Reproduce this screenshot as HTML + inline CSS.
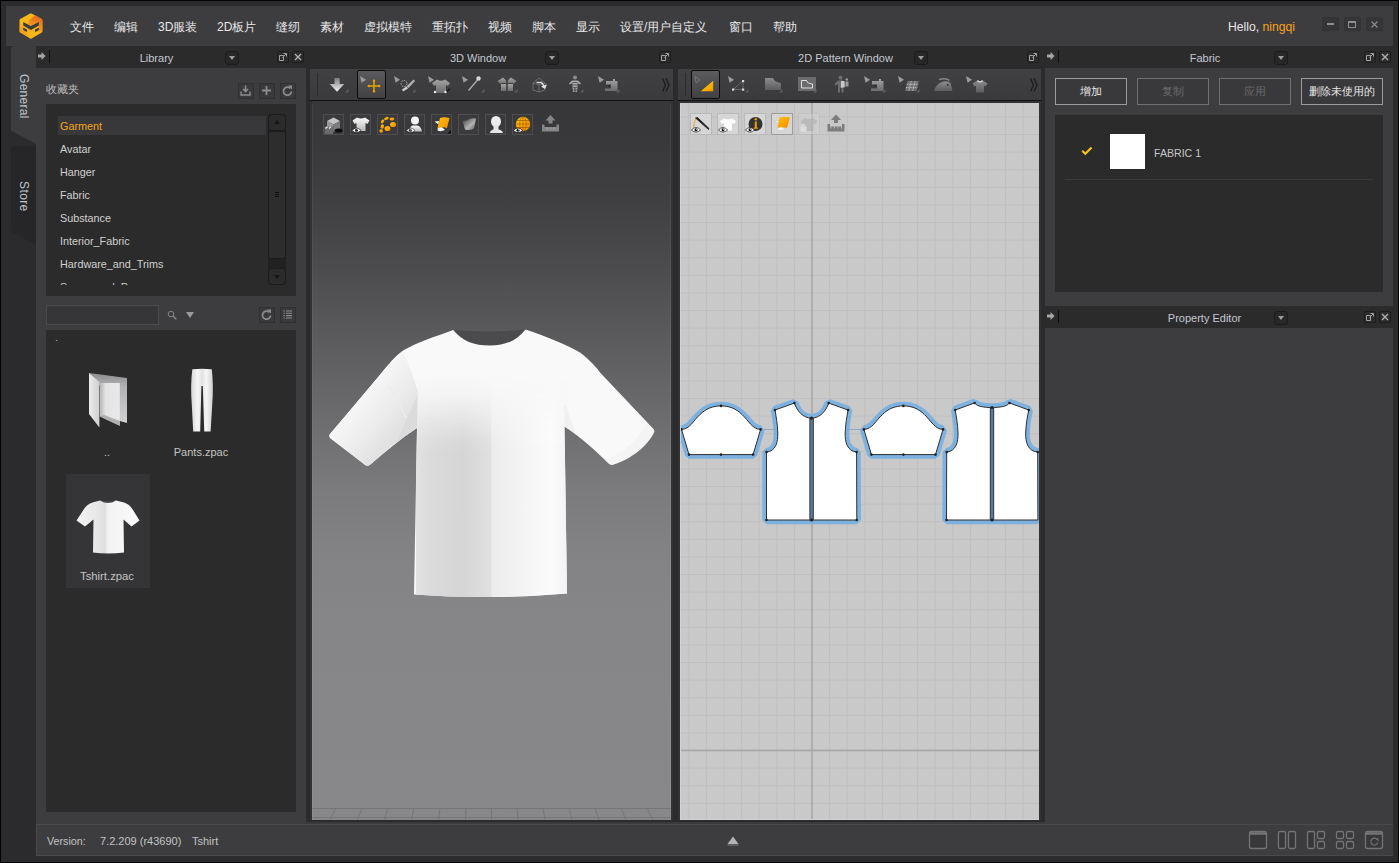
<!DOCTYPE html>
<html>
<head>
<meta charset="utf-8">
<title>CLO</title>
<style>
*{box-sizing:border-box;margin:0;padding:0}
html,body{width:1399px;height:863px;overflow:hidden;background:#000}
body{font-family:"Liberation Sans",sans-serif;font-size:11px;color:#d2d2d2;position:relative}
.abs{position:absolute}
#win{position:absolute;left:1px;top:1px;width:1397px;height:861px;background:#2b2b2d}
#menubar{position:absolute;left:6px;top:6px;width:1387px;height:40px;background:#3d3d40}
.menu{position:absolute;top:19px;font-size:12px;line-height:16px;color:#e6e6e6;white-space:nowrap}
.tbar{position:absolute;top:46px;height:22px;background:#2b2b2c}
.ttl{position:absolute;top:51px;font-size:12px;line-height:14px;color:#c8c8c8;white-space:nowrap;text-align:center}
.pbody{position:absolute;background:#3d3d40}
.dd{position:absolute;top:51px;width:14px;height:14px;background:#272728;border:1px solid #1c1c1d;border-radius:3px;margin:-.5px 0 0 .5px}
.dd:after{content:"";position:absolute;left:3px;top:4px;border-left:3px solid transparent;border-right:3px solid transparent;border-top:4.5px solid #9c9c9c}
.sb{position:absolute;top:51px;width:12px;height:12px;background:#2c2c2d;border:1px solid #1d1d1e;border-radius:2px}
.dark{background:#2b2b2b}
.li{position:absolute;left:60px;font-size:10.8px;line-height:14px;color:#d0d0d0;white-space:nowrap}

.wb{position:absolute;top:18px;width:15px;height:12px;background:#353537;border-radius:2px;box-shadow:0 0 0 1px #333335,0 1px 1px 0 #2d2d2f}
.wb i{position:absolute;display:block}

.t{position:absolute;white-space:nowrap;font-size:11px;line-height:14px;color:#c9c9c9}
.arrow{position:absolute;top:52px;width:8px;height:8px}
.vl{position:absolute;top:50px;width:1px;height:13px;background:#0e0e0e}
.ib{position:absolute;width:16px;height:16px;background:#39393b;border:1px solid #303032}
.btn{position:absolute;top:78px;height:27px;border:1px solid #9b9b9b;background:#39393b;color:#e6e6e6;font-size:11px;line-height:25px;text-align:center;white-space:nowrap}
.btn.dis{border-color:#707072;color:#6a6a6c}
</style>
</head>
<body>
<div id="win"></div>
<div id="menubar"></div>

<!-- title bars strip -->
<div class="tbar" style="left:36px;width:1357px"></div>

<!-- LIBRARY -->
<div class="pbody" style="left:36px;top:68px;width:270px;height:756px"></div>
<!-- 3D -->
<div class="pbody" style="left:310px;top:69px;width:363px;height:31px"></div>
<!-- 2D -->
<div class="pbody" style="left:678px;top:69px;width:363px;height:31px"></div>
<!-- right -->
<div class="pbody" style="left:1045px;top:68px;width:348px;height:756px"></div>
<!-- status -->
<div class="pbody" style="left:36px;top:824px;width:1357px;height:32px;border-top:1px solid #4a4a4c;border-left:1px solid #4a4a4c;border-bottom:1px solid #4a4a4c"></div>

<!-- ===== 3D VIEWPORT ===== -->
<div class="abs" style="left:310px;top:100px;width:363px;height:1px;background:#111"></div>
<div class="abs" style="left:678px;top:100px;width:363px;height:1px;background:#111"></div>
<div id="v3d" class="abs" style="left:312px;top:101px;width:359px;height:719px;background:linear-gradient(#37373a 0%,#39393b 6%,#414143 15%,#4a4a4c 22%,#555557 29%,#69696b 42%,#7b7b7d 54%,#828284 62%,#868688 71%,#88888a 100%);overflow:hidden">
<svg class="abs" style="left:0;top:0" width="359" height="719" viewBox="312 101 359 719">
<defs>
<linearGradient id="gb" x1="414" x2="567" y1="0" y2="0" gradientUnits="userSpaceOnUse">
<stop offset="0" stop-color="#e3e3e3"/><stop offset=".1" stop-color="#dbdbdb"/><stop offset=".32" stop-color="#d5d5d5"/><stop offset=".5" stop-color="#e0e0e0"/><stop offset=".512" stop-color="#ececec"/><stop offset=".75" stop-color="#f5f5f5"/><stop offset=".9" stop-color="#fbfbfb"/><stop offset="1" stop-color="#f3f3f3"/>
</linearGradient>
<linearGradient id="gls" x1="357" y1="402" x2="393.700" y2="433" gradientUnits="userSpaceOnUse"><stop offset="0" stop-color="#f5f5f5" stop-opacity=".9"/><stop offset=".35" stop-color="#f0f0f0"/><stop offset=".6" stop-color="#ececec"/><stop offset="1" stop-color="#e2e2e2"/></linearGradient>
<linearGradient id="gmask" x1="0" x2="0" y1="372" y2="452" gradientUnits="userSpaceOnUse"><stop offset="0" stop-color="#000"/><stop offset=".25" stop-color="#1c1c1c"/><stop offset=".55" stop-color="#808080"/><stop offset=".85" stop-color="#e6e6e6"/><stop offset="1" stop-color="#fff"/></linearGradient>
<linearGradient id="gt" x1="0" x2="0" y1="330" y2="470" gradientUnits="userSpaceOnUse">
<stop offset="0" stop-color="#fff" stop-opacity="1"/><stop offset=".45" stop-color="#fff" stop-opacity=".85"/><stop offset="1" stop-color="#fff" stop-opacity="0"/>
</linearGradient>
<linearGradient id="gsl" x1="329" x2="417" y1="436" y2="380" gradientUnits="userSpaceOnUse">
<stop offset="0" stop-color="#f4f4f4"/><stop offset=".5" stop-color="#fafafa"/><stop offset="1" stop-color="#f3f3f3"/>
</linearGradient>
<linearGradient id="gsr" x1="564" x2="655" y1="380" y2="436" gradientUnits="userSpaceOnUse">
<stop offset="0" stop-color="#f6f6f6"/><stop offset=".4" stop-color="#fcfcfc"/><stop offset="1" stop-color="#fdfdfd"/>
</linearGradient>
</defs>
<!-- collar inside -->
<path d="M453,330 Q490,333 525.5,329.5 Q510,347 490,347 Q468,347 453,330Z" fill="#4b4b4d"/>
<path id="tsil" d="M453.250,330 C462,341 474,345.500 490,345.500 C506,345.500 517,340.500 525.500,329.500 C545,336 568,345 580,352.500 C590,360 596,367 600,372.500 L653,428.500 Q655,430.500 654,432.500 C650,441 637,457 613,464.800 Q610.500,465.500 608.500,463.500 C597,452 582,438 564.500,426.500 L567,593.500 Q490,600 414,594.500 L417,428 C400,439 385,452 370.500,464.500 Q367.500,467 364.500,464.500 L330.500,438.500 Q328,436.500 330,434 L381,373.500 C388,365 395,356 404,350 C416,343 435,336.500 453.250,330Z" fill="#f9f9f9"/>
<clipPath id="ctsil"><use href="#tsil"/></clipPath>
<mask id="mfade" maskUnits="userSpaceOnUse" x="300" y="320" width="400" height="300"><rect x="300" y="320" width="400" height="300" fill="url(#gmask)"/></mask>
<g clip-path="url(#ctsil)">
<rect x="416" y="360" width="152" height="240" fill="url(#gb)" mask="url(#mfade)"/>
<!-- sleeve shading -->
<path d="M402,350 L384,370 L329,435 L367,467 L417,428 L418,392 C414,380 410,365 402,350Z" fill="url(#gls)"/>
<path d="M600,372 L655,431 C648,446 636,458 612,465.500 L605,460 C625,452 638,440 646,424Z" fill="#ececec" opacity=".35"/>
<path d="M417,396 L417,428 L396,444 C402,430 410,412 417,396Z" fill="#d9d9d9" opacity=".8"/>
<path d="M389,386 C396,397 401,407 406,418" fill="none" stroke="#ececec" stroke-width="2"/>
<path d="M564.500,404 L564.500,426.500 L576,434 C572,424 569,412 564.500,404Z" fill="#ebebeb" opacity=".6"/>
</g>
<!-- floor grid -->
<g stroke="#757577" stroke-width="1" fill="none">
<path d="M312,808.5H671M312,817.5H671"/>
<path d="M336,808L330,820M362,808L357.500,820M388,808L384.500,820M414,808L411.500,820M440,808L438.500,820M466,808L465.500,820M491.500,808L491.500,820M517,808L518,820M543,808L545,820M569,808L572,820M595,808L599,820M621,808L626,820M647,808L653,820"/>
</g>
</svg>
</div>

<!-- ===== 2D VIEWPORT ===== -->
<div id="v2d" class="abs" style="left:680px;top:103px;width:359px;height:717px;background:#c9c9c9;overflow:hidden">
<svg class="abs" style="left:0;top:0" width="359" height="717" viewBox="680 103 359 717">
<defs>
<pattern id="grid" x="811.5" y="750" width="17.6" height="17.6" patternUnits="userSpaceOnUse">
<path d="M0.5,0V17.6M0,0.5H17.6" stroke="#bfbfbf" stroke-width="1" fill="none"/>
</pattern>
</defs>
<rect x="680" y="103" width="359" height="717" fill="url(#grid)"/>
<path d="M812,103V820M680,750.5H1039" stroke="#a4a4a4" stroke-width="1.3" fill="none"/>
<g id="pieces">
<!-- seam allowance (blue) -->
<g fill="none" stroke="#7db1e0" stroke-width="8.400" stroke-linejoin="bevel">
<path id="sl1" d="M681.5,429.4 C690,429 693,421 700,414.5 C706,408.5 713,405.9 721,405.9 C729,405.9 736,408.5 742,414.5 C749,421 752,429 760.6,429.4 L753.1,454.6 L689,454.6 Z"/>
<use href="#sl1" x="182.4"/>
<path id="fb" d="M766.5,452.1 C776,451 778,442 777.8,433 C777.6,424 776,416 775,410 L794.4,403.1 C797,411 803,418.1 811.5,418.1 C820,418.1 826,411 828.7,403.1 L848.1,410 C847,416 845.4,424 845.2,433 C845,442 847,451 856.6,452.1 L856.8,520 L766.5,520 Z"/>
<path id="bb" d="M946.7,452.1 C956.2,451 958.2,442 958,433 C957.8,424 956.2,416 955.2,410 L974.6,403 C977,406.500 984,407.5 991.9,407.5 C1000,407.5 1007,406.500 1009.500,403 L1028.8,410 C1027.500,416 1025.900,424 1025.700,433 C1025.500,442 1027.500,451 1037.700,452.1 L1037.900,520 L946.500,520 Z"/>
</g>
<g fill="#fff" stroke="#2e2e2e" stroke-width="1" stroke-linejoin="round">
<use href="#sl1"/><use href="#sl1" x="182.4"/><use href="#fb"/><use href="#bb"/>
</g>
<!-- center lines -->
<path d="M811.6,418V520M992,407.500V520" stroke="#5b7b9d" stroke-width="3.800"/>
<path d="M809.900,418V520M813.300,418V520M990.300,407.500V520M993.700,407.500V520" stroke="#2e2e2e" stroke-width=".9" fill="none"/>
<path d="M760.600,429.500H777.500M845.500,429.500H864" stroke="#7ea4c8" stroke-width="1" opacity=".8"/>
<g fill="#222">
<circle cx="681.5" cy="429.4" r="1.3"/><circle cx="721" cy="405.9" r="1.3"/><circle cx="760.6" cy="429.4" r="1.3"/><circle cx="753.1" cy="454.6" r="1.3"/><circle cx="721" cy="454.6" r="1.3"/><circle cx="689" cy="454.6" r="1.3"/>
<circle cx="863.9" cy="429.4" r="1.3"/><circle cx="903.4" cy="405.9" r="1.3"/><circle cx="943" cy="429.4" r="1.3"/><circle cx="935.5" cy="454.6" r="1.3"/><circle cx="903.4" cy="454.6" r="1.3"/><circle cx="871.4" cy="454.6" r="1.3"/>
<circle cx="766.5" cy="452.1" r="1.3"/><circle cx="775" cy="410" r="1.3"/><circle cx="794.4" cy="403.1" r="1.3"/><circle cx="811.5" cy="418.1" r="1.6"/><circle cx="828.7" cy="403.1" r="1.3"/><circle cx="848.1" cy="410" r="1.3"/><circle cx="856.6" cy="452.1" r="1.3"/><circle cx="856.8" cy="520" r="1.3"/><circle cx="811.6" cy="520" r="1.6"/><circle cx="766.5" cy="520" r="1.3"/>
<circle cx="946.7" cy="452.1" r="1.3"/><circle cx="955.2" cy="410" r="1.3"/><circle cx="974.6" cy="403" r="1.3"/><circle cx="992" cy="407.5" r="1.6"/><circle cx="1009.5" cy="403" r="1.3"/><circle cx="1028.8" cy="410" r="1.3"/><circle cx="1037.7" cy="452.1" r="1.3"/><circle cx="992" cy="520" r="1.6"/><circle cx="946.5" cy="520" r="1.3"/>
</g>
</g>
</svg>
</div>

<!-- edge details -->
<div class="abs" style="left:306px;top:822px;width:739px;height:2px;background:#3a3a3c"></div>
<div class="abs" style="left:680px;top:103px;width:1px;height:717px;background:#d3d3d3"></div>
<div class="abs" style="left:680px;top:819px;width:359px;height:1px;background:#d3d3d3"></div>
<div class="abs" style="left:312px;top:104px;width:1px;height:716px;background:#fff;opacity:.06"></div>
<div class="abs" style="left:670px;top:104px;width:1px;height:716px;background:#fff;opacity:.06"></div>
<div class="abs" style="left:310px;top:101px;width:2px;height:719px;background:#323234"></div>
<div class="abs" style="left:671px;top:101px;width:2px;height:719px;background:#323234"></div>
<div class="abs" style="left:678px;top:101px;width:2px;height:719px;background:#323234"></div>
<div class="abs" style="left:1039px;top:101px;width:2px;height:719px;background:#323234"></div>
<div class="abs" style="left:680px;top:101px;width:359px;height:2px;background:#323234"></div>

<!-- ===== MENU BAR ===== -->
<svg class="abs" style="left:17px;top:10px" width="28" height="32" viewBox="17 10 28 32">
<defs><linearGradient id="lg1" x1="20" y1="14" x2="40" y2="38" gradientUnits="userSpaceOnUse"><stop offset="0" stop-color="#f8bd18"/><stop offset=".55" stop-color="#f4ae1a"/><stop offset="1" stop-color="#f7c016"/></linearGradient>
<linearGradient id="lg2" x1="40" y1="15" x2="32" y2="30" gradientUnits="userSpaceOnUse"><stop offset="0" stop-color="#e5601f"/><stop offset=".6" stop-color="#ee8a1d"/><stop offset="1" stop-color="#f3a61b"/></linearGradient>
<linearGradient id="lg3" x1="19" y1="36" x2="28" y2="28" gradientUnits="userSpaceOnUse"><stop offset="0" stop-color="#ea7e1e"/><stop offset="1" stop-color="#f4ae1a" stop-opacity="0"/></linearGradient></defs>
<path d="M30.850,14.600 L41,20.300 L41,31.200 L30.850,37.300 L20.900,31.200 L20.900,20.300Z" fill="url(#lg1)" stroke="url(#lg1)" stroke-width="2.800" stroke-linejoin="round"/>
<path d="M36,15.800 L41.300,19 Q42.300,19.600 42.300,20.600 L42.300,30.500 L39,32.500 L39,22 L30.850,25.900 C28.500,24.500 28.300,23.500 28.300,23.500 C29.500,19.500 32.500,16.500 36,15.600Z" fill="url(#lg2)"/>
<path d="M19.600,25 L19.600,31.300 L27.500,36.200 L27,30Z" fill="url(#lg3)"/>
<path d="M23.200,22 L30.850,25.900 L38.950,22 L38.950,25.600 L30.850,29.900 L23.200,25.500Z" fill="#3b3b3f"/>
<path d="M23.200,27.500 L26.900,29.400 L26.900,31.900 L23.200,29.900Z M38.950,27.500 L35,29.600 L35,32.200 L38.950,30.100Z" fill="#3b3b3f"/>
</svg>
<div class="menu" style="left:70px">文件</div>
<div class="menu" style="left:114px">编辑</div>
<div class="menu" style="left:158px">3D服装</div>
<div class="menu" style="left:217px">2D板片</div>
<div class="menu" style="left:276px">缝纫</div>
<div class="menu" style="left:320px">素材</div>
<div class="menu" style="left:364px">虚拟模特</div>
<div class="menu" style="left:432px">重拓扑</div>
<div class="menu" style="left:488px">视频</div>
<div class="menu" style="left:532px">脚本</div>
<div class="menu" style="left:576px">显示</div>
<div class="menu" style="left:620px">设置/用户自定义</div>
<div class="menu" style="left:729px">窗口</div>
<div class="menu" style="left:773px">帮助</div>
<div class="menu" style="left:1228px;font-size:12.2px">Hello, <span style="color:#f5a31a">ningqi</span></div>
<div class="wb" style="left:1322.500px"><i style="left:4px;top:5px;width:7px;height:2px;background:#8e8e8e"></i></div>
<div class="wb" style="left:1344.500px"><i style="left:3.500px;top:2.500px;width:8px;height:7px;border:1px solid #8e8e8e;border-top-width:2px"></i></div>
<div class="wb" style="left:1366.500px"><svg class="abs" style="left:4px;top:2.500px" width="7" height="7"><path d="M0.500,0.500L6.500,6.500M6.500,0.500L0.500,6.500" stroke="#909090" stroke-width="1.100"/></svg></div>

<!-- ===== TITLE BARS ===== -->
<svg class="arrow" style="left:38px;top:52px" viewBox="0 0 9 9"><path d="M0,2.700H4V0L8.500,4.500L4,9V6.300H0Z" fill="#a6a6a6"/></svg><div class="vl" style="left:49px;top:50px"></div><div class="t" style="left:96.5px;width:120px;text-align:center;top:51px;color:#c4c8d0">Library</div><div class="dd" style="left:224px;top:51px"></div><div class="sb" style="left:277px;top:51px"><svg class="abs" style="left:1px;top:1px" width="8" height="8" viewBox="0 0 8 8"><path d="M0.500,2.500H4.500V7.500H0.500Z" fill="none" stroke="#a0a0a0" stroke-width="1"/><path d="M3.500,4.500L7,1M4.500,0.500H7.500V3.500" fill="none" stroke="#a0a0a0" stroke-width="1"/></svg></div><div class="sb" style="left:292px;top:51px"><svg class="abs" style="left:1px;top:1px" width="8" height="8" viewBox="0 0 8 8"><path d="M1,1L7,7M7,1L1,7" stroke="#b0b0b0" stroke-width="1.400"/></svg></div>
<div class="t" style="left:418px;width:120px;text-align:center;top:51px;color:#c4c8d0">3D Window</div><div class="dd" style="left:544px;top:51px"></div><div class="sb" style="left:659px;top:51px"><svg class="abs" style="left:1px;top:1px" width="8" height="8" viewBox="0 0 8 8"><path d="M0.500,2.500H4.500V7.500H0.500Z" fill="none" stroke="#a0a0a0" stroke-width="1"/><path d="M3.500,4.500L7,1M4.500,0.500H7.500V3.500" fill="none" stroke="#a0a0a0" stroke-width="1"/></svg></div>
<div class="t" style="left:785.5px;width:120px;text-align:center;top:51px;color:#c4c8d0">2D Pattern Window</div><div class="dd" style="left:913px;top:51px"></div><div class="sb" style="left:1027px;top:51px"><svg class="abs" style="left:1px;top:1px" width="8" height="8" viewBox="0 0 8 8"><path d="M0.500,2.500H4.500V7.500H0.500Z" fill="none" stroke="#a0a0a0" stroke-width="1"/><path d="M3.500,4.500L7,1M4.500,0.500H7.500V3.500" fill="none" stroke="#a0a0a0" stroke-width="1"/></svg></div>
<svg class="arrow" style="left:1047px;top:52px" viewBox="0 0 9 9"><path d="M0,2.700H4V0L8.500,4.500L4,9V6.300H0Z" fill="#a6a6a6"/></svg><div class="vl" style="left:1058px;top:50px"></div><div class="t" style="left:1145px;width:120px;text-align:center;top:51px;color:#c4c8d0">Fabric</div><div class="dd" style="left:1273px;top:51px"></div><div class="sb" style="left:1364px;top:51px"><svg class="abs" style="left:1px;top:1px" width="8" height="8" viewBox="0 0 8 8"><path d="M0.500,2.500H4.500V7.500H0.500Z" fill="none" stroke="#a0a0a0" stroke-width="1"/><path d="M3.500,4.500L7,1M4.500,0.500H7.500V3.500" fill="none" stroke="#a0a0a0" stroke-width="1"/></svg></div><div class="sb" style="left:1379px;top:51px"><svg class="abs" style="left:1px;top:1px" width="8" height="8" viewBox="0 0 8 8"><path d="M1,1L7,7M7,1L1,7" stroke="#b0b0b0" stroke-width="1.400"/></svg></div>
<div class="tbar" style="left:1045px;top:306px;width:348px"></div>
<svg class="arrow" style="left:1047px;top:312px" viewBox="0 0 9 9"><path d="M0,2.700H4V0L8.500,4.500L4,9V6.300H0Z" fill="#a6a6a6"/></svg><div class="vl" style="left:1058px;top:310px"></div><div class="t" style="left:1144.5px;width:120px;text-align:center;top:311px;color:#c4c8d0">Property Editor</div><div class="dd" style="left:1273px;top:311px"></div><div class="sb" style="left:1364px;top:311px"><svg class="abs" style="left:1px;top:1px" width="8" height="8" viewBox="0 0 8 8"><path d="M0.500,2.500H4.500V7.500H0.500Z" fill="none" stroke="#a0a0a0" stroke-width="1"/><path d="M3.500,4.500L7,1M4.500,0.500H7.500V3.500" fill="none" stroke="#a0a0a0" stroke-width="1"/></svg></div><div class="sb" style="left:1379px;top:311px"><svg class="abs" style="left:1px;top:1px" width="8" height="8" viewBox="0 0 8 8"><path d="M1,1L7,7M7,1L1,7" stroke="#b0b0b0" stroke-width="1.400"/></svg></div>

<!-- ===== LIBRARY ===== -->
<div class="t" style="left:46px;top:82px;font-size:11px;color:#bdbdbd">收藏夹</div>
<div class="ib" style="left:238px;top:83px"><svg class="abs" style="left:1px;top:1px" width="11" height="11" viewBox="0 0 11 11"><path d="M5.500,0.500V6M3,4L5.500,6.500L8,4" fill="none" stroke="#8c8c8c" stroke-width="1.600"/><path d="M1,6.500V10H10V6.500" fill="none" stroke="#8c8c8c" stroke-width="1.400"/></svg></div>
<div class="ib" style="left:259px;top:83px"><svg class="abs" style="left:1px;top:1px" width="11" height="11" viewBox="0 0 11 11"><path d="M5.500,1V10M1,5.500H10" fill="none" stroke="#8c8c8c" stroke-width="1.800"/></svg></div>
<div class="ib" style="left:280px;top:83px"><svg class="abs" style="left:1px;top:1px" width="11" height="11" viewBox="0 0 11 11"><path d="M8.500,3.500A4,4 0 1 0 9.500,6.500" fill="none" stroke="#8c8c8c" stroke-width="1.700"/><path d="M6,0.500H10V4.500Z" fill="#8c8c8c"/></svg></div>
<div class="abs dark" style="left:46px;top:104px;width:250px;height:192px;overflow:hidden">
  <div class="abs" style="left:12px;top:12px;width:208px;height:19px;background:#38383a"></div>
  <div class="li" style="left:14px;top:15px;color:#f5a31a">Garment</div>
  <div class="li" style="left:14px;top:38px">Avatar</div>
  <div class="li" style="left:14px;top:61px">Hanger</div>
  <div class="li" style="left:14px;top:84px">Fabric</div>
  <div class="li" style="left:14px;top:107px">Substance</div>
  <div class="li" style="left:14px;top:130px">Interior_Fabric</div>
  <div class="li" style="left:14px;top:153px">Hardware_and_Trims</div>
  <div class="abs" style="left:12px;top:176px;width:200px;height:5px;overflow:hidden"><div class="li" style="left:2px;top:0">Scene_and_Props</div></div>
  <!-- scrollbar -->
  <div class="abs" style="left:222px;top:10px;width:18px;height:171px;background:#212122;border-radius:4px"></div>
  <div class="abs" style="left:222px;top:10px;width:18px;height:17px;background:#2b2b2c;border:1px solid #1c1c1d;border-radius:4px"></div>
  <div class="abs" style="left:228px;top:16px;border-left:3px solid transparent;border-right:3px solid transparent;border-bottom:4px solid #161617;width:0;height:0"></div>
  <div class="abs" style="left:222px;top:27px;width:18px;height:128px;background:#2d2d2e;border:1px solid #1c1c1d;border-radius:3px"></div>
  <div class="abs" style="left:229px;top:88px;width:4px;height:1px;background:#101011;box-shadow:0 2px 0 #101011,0 4px 0 #101011"></div>
  <div class="abs" style="left:222px;top:164px;width:18px;height:17px;background:#2b2b2c;border:1px solid #1c1c1d;border-radius:4px"></div>
  <div class="abs" style="left:228px;top:171px;border-left:3px solid transparent;border-right:3px solid transparent;border-top:4px solid #161617;width:0;height:0"></div>
</div>
<!-- search row -->
<div class="abs" style="left:46px;top:305px;width:113px;height:20px;background:#363638;border:1px solid #4b4b4d"></div>
<svg class="abs" style="left:167px;top:310px" width="11" height="11" viewBox="0 0 11 11"><circle cx="4" cy="4" r="2.800" fill="none" stroke="#858585" stroke-width="1"/><path d="M6.200,6.200L9.300,9.300" stroke="#858585" stroke-width="1.500"/></svg>
<div class="abs" style="left:186px;top:312px;width:0;height:0;border-left:4.500px solid transparent;border-right:4.500px solid transparent;border-top:6px solid #9a9a9a"></div>
<div class="ib" style="left:259px;top:307px"><svg class="abs" style="left:1px;top:1px" width="11" height="11" viewBox="0 0 11 11"><path d="M8.500,3.500A4,4 0 1 0 9.500,6.500" fill="none" stroke="#8c8c8c" stroke-width="1.700"/><path d="M6,0.500H10V4.500Z" fill="#8c8c8c"/></svg></div>
<div class="ib" style="left:280px;top:307px"><svg class="abs" style="left:1px;top:1px" width="11" height="11" viewBox="0 0 11 11"><path d="M1.500,2H2.800M4,2H10M1.500,4.300H2.800M4,4.300H10M1.500,6.600H2.800M4,6.600H10M1.500,9H2.800M4,9H10" stroke="#8e8e8e" stroke-width="1.100"/></svg></div>
<!-- file list -->
<div class="abs dark" style="left:46px;top:330px;width:250px;height:482px"></div>
<div class="t" style="left:55px;top:330px;color:#aaa">.</div>
<div class="abs" style="left:66px;top:474px;width:84px;height:114px;background:#353537"></div>
<div class="t" style="left:47px;width:120px;text-align:center;top:445px;color:#bdbdbd">..</div>
<div class="t" style="left:141px;width:120px;text-align:center;top:445px;color:#c4c4c4">Pants.zpac</div>
<div class="t" style="left:47px;width:120px;text-align:center;top:569px;color:#c4c4c4;font-size:11.3px">Tshirt.zpac</div>
<!-- folder icon -->
<svg class="abs" style="left:86px;top:370px" width="44" height="60" viewBox="86 370 44 60">
<defs><linearGradient id="fo1" x1="0" x2="0" y1="0" y2="1"><stop offset="0" stop-color="#8e8e90"/><stop offset=".3" stop-color="#b4b4b6"/><stop offset="1" stop-color="#d0d0d2"/></linearGradient>
<linearGradient id="fo2" x1="0" x2="1" y1="0" y2="0"><stop offset="0" stop-color="#ececec"/><stop offset="1" stop-color="#cfcfcf"/></linearGradient>
<linearGradient id="fo3" x1="0" x2="1" y1="0" y2="0"><stop offset="0" stop-color="#b4b4b6"/><stop offset=".3" stop-color="#e4e4e4"/><stop offset="1" stop-color="#e8e8e8"/></linearGradient></defs>
<path d="M89,373 L127,378 L127,423 L119.800,421 L99.500,385Z" fill="url(#fo1)"/>
<path d="M99.800,383 L119.800,383 L119.800,425.800 L99.800,416.500Z" fill="url(#fo3)"/>
<path d="M99.800,416.500 L119.800,425.800 L119.800,421 L104,415Z" fill="#a2a2a4" opacity=".8"/>
<path d="M89,373 L99.400,382 L99.400,427.600 L89,414Z" fill="url(#fo2)"/>
</svg>
<!-- pants icon -->
<svg class="abs" style="left:188px;top:367px" width="28" height="68" viewBox="188 367 28 68">
<defs><linearGradient id="pa" x1="0" x2="1" y1="0" y2="0"><stop offset="0" stop-color="#d6d6d6"/><stop offset=".3" stop-color="#f6f6f6"/><stop offset=".5" stop-color="#e2e2e2"/><stop offset=".7" stop-color="#f6f6f6"/><stop offset="1" stop-color="#d0d0d0"/></linearGradient></defs>
<path d="M192.300,369.300 Q202,368.300 211.800,369.300 C213,380 213.300,392 212.200,405 L210.600,431.500 L204.200,431.500 L202.800,386 L201.400,386 L200.200,431.500 L193.200,431.500 L191.800,405 C190.800,392 191,380 192.300,369.300Z" fill="url(#pa)"/>
</svg>
<!-- tshirt icon -->
<svg class="abs" style="left:74px;top:497px" width="68" height="60" viewBox="74 497 68 60">
<defs><linearGradient id="ts" x1="0" x2="1" y1="0" y2="0"><stop offset="0" stop-color="#f2f2f2"/><stop offset=".3" stop-color="#e9e9e9"/><stop offset=".45" stop-color="#dedede"/><stop offset=".5" stop-color="#f3f3f3"/><stop offset="1" stop-color="#fafafa"/></linearGradient></defs>
<path d="M100,500.500 Q108,503.500 116,500.500 L124,502.500 C129,504 131,507 133,510 L139.500,520.500 L131.500,526.500 L123.500,519.500 L124,552.500 Q108,554.500 93,552.500 L93.500,519.500 L85,526.500 L76.500,520.500 L84,509 C86,506 88,504 92.500,502.500Z" fill="url(#ts)"/>
<path d="M100,500.500 Q108,502 116,500.500 Q108,505.500 100,500.500Z" fill="#4a4a4c"/>
</svg>

<!-- ===== FABRIC PANEL ===== -->
<div class="btn" style="left:1055px;width:72px">增加</div>
<div class="btn dis" style="left:1137px;width:72px">复制</div>
<div class="btn dis" style="left:1219px;width:72px">应用</div>
<div class="btn" style="left:1301px;width:82px">删除未使用的</div>
<div class="abs dark" style="left:1055px;top:115px;width:328px;height:177px"></div>
<svg class="abs" style="left:1081px;top:146px" width="12" height="10" viewBox="0 0 12 10"><path d="M1.200,4.800L4.300,7.800L10.600,1.500" fill="none" stroke="#f7c11e" stroke-width="2.200"/></svg>
<div class="abs" style="left:1110px;top:134px;width:35px;height:35px;background:#fff"></div>
<div class="t" style="left:1154px;top:146px;font-size:10.600px;color:#c6c6c6">FABRIC 1</div>
<div class="abs" style="left:1065px;top:179px;width:308px;height:1px;background:#39393b"></div>

<!-- ===== STATUS BAR ===== -->
<div class="t" style="left:47px;top:834px;font-size:10.700px;color:#c2c2c2">Version:</div>
<div class="t" style="left:100px;top:834px;color:#c2c2c2">7.2.209 (r43690)</div>
<div class="t" style="left:192px;top:834px;color:#c2c2c2">Tshirt</div>
<svg class="abs" style="left:726px;top:835px" width="14" height="12" viewBox="0 0 14 12"><path d="M7,1.500L12.500,9H1.500Z" fill="#b4b4b4"/><path d="M1.500,10H12.500" stroke="#6a6a6c" stroke-width="1.500"/></svg>
<svg class="abs" style="left:1248px;top:830px" width="138" height="21" viewBox="1248 830 138 21" fill="#38383a" stroke="#747476" stroke-width="1.300">
<rect x="1249.500" y="831.500" width="17" height="17" rx="2"/><path d="M1250,833.500H1266" stroke-width="2.500"/>
<rect x="1278.500" y="831.500" width="7" height="17" rx="1.500"/><rect x="1288.500" y="831.500" width="7" height="17" rx="1.500"/>
<rect x="1307.500" y="831.500" width="7" height="17" rx="1.500"/><rect x="1317.500" y="831.500" width="7" height="7" rx="1.500"/><rect x="1317.500" y="841.500" width="7" height="7" rx="1.500"/>
<rect x="1336.500" y="831.500" width="7" height="7" rx="1.500"/><rect x="1346.500" y="831.500" width="7" height="7" rx="1.500"/><rect x="1336.500" y="841.500" width="7" height="7" rx="1.500"/><rect x="1346.500" y="841.500" width="7" height="7" rx="1.500"/>
<rect x="1365.500" y="831.500" width="17" height="17" rx="2"/><path d="M1366,833.500H1382" stroke-width="2.500"/>
<path d="M1377.200,839.500A3.500,3.500 0 1 0 1377.800,842.500" stroke-width="1.100"/><path d="M1375.500,838.500H1378.500V841.500Z" fill="#747476" stroke="none"/>
</svg>

<!-- ===== LEFT TABS ===== -->
<svg class="abs" style="left:1px;top:46px" width="35" height="250" viewBox="1 46 35 250">
<path d="M11,50 Q11,46 15,46 H36 V144 L11,130.500Z" fill="#3d3d40"/>
<path d="M11,150 Q11,146 15,146 L36,146 V245 L11,231.500Z" fill="#262628"/>
</svg>
<div class="abs" style="left:16px;top:74px;width:18px;height:60px"><div style="transform:rotate(90deg);transform-origin:0 0;position:absolute;left:15px;top:0;font-size:12px;line-height:14px;letter-spacing:.3px;color:#bfc3cb;white-space:nowrap">General</div></div>
<div class="abs" style="left:16px;top:181px;width:18px;height:60px"><div style="transform:rotate(90deg);transform-origin:0 0;position:absolute;left:15px;top:0;font-size:12px;line-height:14px;letter-spacing:.4px;color:#bfc3cb;white-space:nowrap">Store</div></div>

<!-- ===== 3D TOOLBAR ===== -->
<div class="abs" style="left:310px;top:69px;width:363px;height:31px;background:linear-gradient(#414143,#3a3a3c)"></div>
<div class="abs" style="left:678px;top:69px;width:363px;height:31px;background:linear-gradient(#414143,#3a3a3c)"></div>
<div class="abs" style="left:317px;top:73px;width:1px;height:23px;background:#2c2c2e"></div>
<div class="abs" style="left:685px;top:73px;width:1px;height:23px;background:#2c2c2e"></div>
<div class="abs" style="left:357px;top:70px;width:29px;height:29px;border:1.500px solid #0c0c0c;border-radius:2px;background:linear-gradient(#5b5b5d,#414143)"></div>
<div class="abs" style="left:691px;top:70px;width:29px;height:29px;border:1.500px solid #0c0c0c;border-radius:2px;background:linear-gradient(#5b5b5d,#414143)"></div>
<svg class="abs" style="left:310px;top:69px" width="363" height="31" viewBox="310 69 363 31">
<defs>
<linearGradient id="gw" x1="0" x2="0" y1="0" y2="1"><stop offset="0" stop-color="#7c7c7c"/><stop offset="1" stop-color="#f4f4f4"/></linearGradient>
<linearGradient id="gg" x1="0" x2="0" y1="0" y2="1"><stop offset="0" stop-color="#a4a4a4"/><stop offset="1" stop-color="#6c6c6c"/></linearGradient>
</defs>
<path d="M334.500,78H339.700V84H344.300L337,91.700L329.700,84H334.500Z" fill="url(#gw)"/>
<path d="M345,92.5L348.5,89V92.5Z" fill="#5e5e60"/><path d="M360,76L366,79.8L361.6,82.8Z" fill="#9c9c9c"/>
<path d="M374,81V91M369,86H379" stroke="#e0a800" stroke-width="1.500"/>
<g fill="#f59a00"><circle cx="374" cy="80.800" r="1.200"/><circle cx="374" cy="91.200" r="1.200"/><circle cx="368.800" cy="86" r="1.200"/><circle cx="379.200" cy="86" r="1.200"/></g>
<path d="M394,76L400,79.8L395.6,82.8Z" fill="#9c9c9c"/>
<circle cx="404" cy="83.500" r="3" fill="none" stroke="#b8b8b8" stroke-width="1" stroke-dasharray="1.500 1.200"/>
<path d="M406.500,86.500L413.500,79.500L415,81L408.500,88Z" fill="#b4b4b4"/><path d="M402,89.500L406.500,86.500L408,88.500L403,91.500Z" fill="#d0d0d0"/>
<path d="M412,92.5L415.5,89V92.5Z" fill="#5e5e60"/><path d="M428,76L434,79.8L429.6,82.8Z" fill="#9c9c9c"/>
<path d="M437,79.500Q441,82 445,79.500L450,83L448,86L446,85V93H436V85L434,86L432,83Z" fill="url(#gg)"/>
<path d="M446,92.500L450,88.500" stroke="#1a1a1a" stroke-width="1.600"/><circle cx="435" cy="92" r="1.200" fill="#eee"/><circle cx="445.500" cy="92" r="1.200" fill="#eee"/>
<path d="M462,76L468,79.8L463.6,82.8Z" fill="#9c9c9c"/>
<path d="M468.500,90.500L477.500,80" stroke="#b0b0b0" stroke-width="1.200"/><circle cx="478.500" cy="78.500" r="2.200" fill="#d8d8d8"/>
<path d="M481,92.5L484.5,89V92.5Z" fill="#5e5e60"/>
<path d="M497.500,81L503,77.500Q505,78.500 506.200,81V83H501V84.500Z M516.500,81L511,77.500Q509,78.500 507.800,81V83H513V84.500Z" fill="url(#gg)"/>
<path d="M501,84H506.200V91H501Z M507.800,84H513V91H507.800Z" fill="url(#gg)"/>
<path d="M514,92.5L517.5,89V92.5Z" fill="#5e5e60"/>
<path d="M533,83L539,78L545,83V90L539,92L533,90Z M533,83L539,85L545,83 M539,85V92" fill="none" stroke="#6c6c6e" stroke-width="1"/>
<path d="M536.500,82.500H541.500L544,86" fill="none" stroke="#d8d8d8" stroke-width="1.600"/><path d="M541,86.500L547,84.500L545,89Z" fill="#e4e4e4"/>
<circle cx="575" cy="77.500" r="2" fill="#8a8a8a"/>
<path d="M569,83.500L572,80.500H578L581,83.500L580,84.500L577.500,83V87L577,92H575.500V88H574.500V92H573L572.500,87V83L570,84.500Z" fill="#a8a8a8"/>
<path d="M572.500,82.500H577.500M572.500,85H577.500M573,87.500H577M573,90H577" stroke="#4a4a4c" stroke-width=".8"/>
<path d="M580,92.5L583.5,89V92.5Z" fill="#5e5e60"/><path d="M598,76L604,79.8L599.6,82.8Z" fill="#9c9c9c"/>
<path d="M606,81H613V79H615V81H617.500V91H605V88.500H611V84.500H606Z" fill="url(#gg)"/><path d="M607.500,86.500L610,84.500V87Z" fill="#2a2a2a"/>
<path d="M616,92.5L619.5,89V92.5Z" fill="#5e5e60"/>
<path d="M662.500,78.500L665.500,85L662.500,91.500M666,78.500L669,85L666,91.500" fill="none" stroke="#1c1c1c" stroke-width="1.300"/>
</svg>

<!-- ===== 2D TOOLBAR ===== -->
<svg class="abs" style="left:678px;top:69px" width="363" height="31" viewBox="678 69 363 31">
<defs><linearGradient id="gy" x1="0" x2="1" y1="0" y2="1"><stop offset="0" stop-color="#ffe000"/><stop offset="1" stop-color="#f59400"/></linearGradient></defs>
<path d="M694.800,76.500L699.800,80L696.200,82.800Z" fill="none" stroke="#7c7c7e" stroke-width=".9"/>
<path d="M700.800,91.200H713.200V80.800Z" fill="url(#gy)"/>
<path d="M728,76L734,79.8L729.6,82.8Z" fill="#9c9c9c"/>
<path d="M733,89.500H743V81Z" fill="none" stroke="#6e6e70" stroke-width=".9"/>
<g fill="#d8d8d8"><rect x="732" y="88.500" width="2.200" height="2.200"/><rect x="742" y="88.500" width="2.200" height="2.200"/><rect x="742" y="80" width="2.200" height="2.200"/></g>
<path d="M745,92.5L748.5,89V92.5Z" fill="#5e5e60"/>
<path d="M765,78H773Q774,82 781,83V90H765Z" fill="url(#gg2)"/>
<path d="M779,92.5L782.5,89V92.5Z" fill="#5e5e60"/>
<rect x="798" y="77" width="18" height="14" fill="#6b6b6d"/>
<path d="M801.500,80.500H806.500Q807,83.500 812.500,84V88H801.500Z" fill="none" stroke="#e0e0e0" stroke-width="1"/>
<path d="M813,92.5L816.5,89V92.5Z" fill="#5e5e60"/>
<circle cx="840.500" cy="77.800" r="2" fill="#6e6e70"/>
<path d="M834.500,84L838,80.500H843L845.500,83V87H843.500V92.500H841.500V88H840V92.500H838V84L835.500,85.500Z" fill="#6e6e70"/>
<path d="M841,81H844.500V87.500H841Z" fill="#c8c8c8"/><circle cx="846.800" cy="79.500" r="1.300" fill="#9a9a9a"/><path d="M845.500,81.500H848.500V86.500H845.500Z" fill="#9a9a9a"/>
<path d="M864,76L870,79.8L865.6,82.8Z" fill="#9c9c9c"/>
<path d="M872,81H879V79H881V81H883.500V91H871V88.500H877V84.500H872Z" fill="url(#gg)"/><path d="M873.500,86.500L876,84.500V87Z" fill="#2a2a2a"/>
<path d="M882,92.5L885.5,89V92.5Z" fill="#5e5e60"/><path d="M898,76L904,79.8L899.6,82.8Z" fill="#9c9c9c"/>
<path d="M907.500,81H919L916.500,91H905Z" fill="#707072"/>
<path d="M906.800,84.300H918.200M906,87.600H917.400M911.300,81L908.800,91M915.200,81L912.700,91" stroke="#cfcfcf" stroke-width=".8" stroke-dasharray="1.400 .8"/>
<path d="M916,92.5L919.5,89V92.5Z" fill="#5e5e60"/>
<path d="M934,91Q936,84 943,81.500Q948,80.500 950.500,83L952.500,91Z" fill="url(#gg2)"/><path d="M939,79.500Q946,77.500 949.500,80.500" fill="none" stroke="#858587" stroke-width="1.600"/><circle cx="947.800" cy="84.800" r=".9" fill="#222"/>
<path d="M966,76L972,79.8L967.6,82.8Z" fill="#9c9c9c"/>
<path d="M977.500,80.500Q980,83 982.500,80.500L987.500,83.500L985.500,86.500L984,85.800V92.500H976V85.800L974.500,86.500L972.500,83.500Z" fill="url(#gg2)"/><path d="M977.500,80.500Q980,83.500 982.500,80.500" fill="none" stroke="#e4e4e4" stroke-width="1.200"/>
<path d="M1030.500,78.500L1033.500,85L1030.500,91.500M1034,78.500L1037,85L1034,91.500" fill="none" stroke="#1c1c1c" stroke-width="1.300"/>
<defs><linearGradient id="gg2" x1="0" x2="0" y1="0" y2="1"><stop offset="0" stop-color="#8c8c8e"/><stop offset="1" stop-color="#5c5c5e"/></linearGradient></defs>
</svg>

<!-- ===== 3D VIEW ICONS ===== -->
<svg class="abs" style="left:321px;top:110px" width="245" height="28" viewBox="320 110 245 28">
<defs>
<linearGradient id="io" x1="0" x2="1" y1="0" y2="1"><stop offset="0" stop-color="#ffc400"/><stop offset="1" stop-color="#f58a00"/></linearGradient>
<linearGradient id="iw" x1="0" x2="0" y1="0" y2="1"><stop offset="0" stop-color="#fafafa"/><stop offset="1" stop-color="#b8b8b8"/></linearGradient>
<linearGradient id="igr" x1="0" x2="1" y1="0" y2="1"><stop offset="0" stop-color="#3a3a3a"/><stop offset=".6" stop-color="#b4b4b4"/><stop offset="1" stop-color="#555"/></linearGradient>
</defs>
<rect x="322.5" y="114.500" width="20" height="20" fill="#3a3a3c" stroke="#4e4e50" stroke-width="1"/><rect x="349.5" y="114.500" width="20" height="20" fill="#3a3a3c" stroke="#4e4e50" stroke-width="1"/><rect x="376.5" y="114.500" width="20" height="20" fill="#3a3a3c" stroke="#4e4e50" stroke-width="1"/><rect x="403.5" y="114.500" width="20" height="20" fill="#3a3a3c" stroke="#4e4e50" stroke-width="1"/><rect x="430.5" y="114.500" width="20" height="20" fill="#3a3a3c" stroke="#4e4e50" stroke-width="1"/><rect x="457.5" y="114.500" width="20" height="20" fill="#3a3a3c" stroke="#4e4e50" stroke-width="1"/><rect x="484.5" y="114.500" width="20" height="20" fill="#3a3a3c" stroke="#4e4e50" stroke-width="1"/><rect x="511.5" y="114.500" width="20" height="20" fill="#3a3a3c" stroke="#4e4e50" stroke-width="1"/>
<!-- 1 cube -->
<path d="M326,121L332.500,117.500L339,121L332.500,124.500Z" fill="#c4c4c4"/><path d="M326,121L332.500,124.500V132L326,128.500Z" fill="#9a9a9a"/><path d="M339,121L332.500,124.500V132L339,128.500Z" fill="#7c7c7c"/>
<ellipse cx="337.500" cy="130.500" rx="4" ry="2" fill="#0c0c0c"/><path d="M323.500,126.500H332V134H323.500Z" fill="#6a6a6a"/><path d="M324.500,128.500L326.500,126.800M328,128.500L330,126.800" stroke="#f0f0f0" stroke-width="1.200"/>
<!-- 2 tshirt -->
<path d="M356,117.500Q360,119.500 364,117.500L368.500,120.500L366.500,124L364.500,123V131H355.500V123L353.500,124L351.500,120.500Z" fill="url(#iw)"/>
<path d="M350.9,130.5Q355.5,125.5 360.1,130.5Q355.5,134.7 350.9,130.5Z" fill="#fff" stroke="#1a1a1a" stroke-width=".7"/><circle cx="355.5" cy="130.3" r="1.500" fill="#111"/><circle cx="356.1" cy="129.7" r=".5" fill="#fff"/>
<!-- 3 dots -->
<g fill="url(#io)"><ellipse cx="385.500" cy="118.500" rx="2.400" ry="1.500" transform="rotate(-25 385.500 118.500)"/><ellipse cx="391" cy="119" rx="2.300" ry="1.600"/><ellipse cx="392" cy="124.500" rx="3" ry="2.600"/><ellipse cx="386.500" cy="128.500" rx="2.900" ry="2.600"/><ellipse cx="381.300" cy="126.500" rx="1.700" ry="2.300" transform="rotate(15 381.300 126.500)"/><ellipse cx="381.500" cy="121.500" rx="1.500" ry="2.100" transform="rotate(35 381.500 121.500)"/><circle cx="380.200" cy="131" r="1.800"/></g>
<!-- 4 avatar -->
<circle cx="414" cy="120.500" r="4" fill="#f4f4f4"/><path d="M408.500,131.500Q408.500,126 412,125.500H416Q420,126 421,131.500Z" fill="url(#iw)"/>
<g opacity=".75"><path d="M404.9,130.5Q409.5,125.5 414.1,130.5Q409.5,134.7 404.9,130.5Z" fill="#fff" stroke="#1a1a1a" stroke-width=".7"/><circle cx="409.5" cy="130.3" r="1.500" fill="#111"/><circle cx="410.1" cy="129.7" r=".5" fill="#fff"/></g>
<!-- 5 fabric orange -->
<path d="M433.500,121.500L438,121L436.500,130.500Q440,132 444,130L442,128Z" fill="#f0f0f0"/><path d="M439,118Q443,116.500 448.500,118L446,128Q441,126.500 436.500,128.500Z" fill="url(#io)"/><path d="M446.500,133.500L450,130V133.500Z" fill="#0c0c0c"/>
<!-- 6 gray fabric -->
<path d="M461.500,121L465.500,120.500Q470,117.500 475,118.500L473,128.500Q469,131 464,129.500Z" fill="url(#igr)"/>
<!-- 7 head -->
<ellipse cx="495" cy="121.500" rx="5" ry="5.600" fill="#ececec"/><path d="M492.500,125H497.500V129.500Q501.500,130 502,133H489Q489,130.500 492.500,129.500Z" fill="#e4e4e4"/>
<!-- 8 globe -->
<circle cx="522" cy="124" r="7.200" fill="url(#io)"/><g fill="none" stroke="#8a4a00" stroke-width=".7" opacity=".8"><path d="M515,124H529M516,120.500H528M516,127.500H528"/><ellipse cx="522" cy="124" rx="3.300" ry="7.200"/><path d="M522,116.800V131.200"/></g>
<path d="M512.4,130.5Q517.0,125.5 521.6,130.5Q517.0,134.7 512.4,130.5Z" fill="#fff" stroke="#1a1a1a" stroke-width=".7"/><circle cx="517.0" cy="130.3" r="1.500" fill="#111"/><circle cx="517.6" cy="129.7" r=".5" fill="#fff"/>
<!-- 9 export -->
<path d="M549.500,115L554.500,120.500H551.500V123.500H547.500V120.500H544.500Z" fill="#858587"/>
<path d="M541,124.500H543.500V127H555.500V124.500H558V131.500H541Z" fill="#858587"/><path d="M545,127.500H547V129.500H545ZM548.500,127.500H550.500V129.500H548.500ZM552,127.500H554V129.500H552Z" fill="#9a9a9c"/>
</svg>

<!-- ===== 2D VIEW ICONS ===== -->
<svg class="abs" style="left:688px;top:110px" width="162" height="28" viewBox="688 110 162 28">
<rect x="690.5" y="113.500" width="21" height="21" fill="#d6d6d6" stroke="#b9b9b9" stroke-width="1" opacity="1"/><rect x="717.5" y="113.500" width="21" height="21" fill="#d6d6d6" stroke="#b9b9b9" stroke-width="1" opacity="1"/><rect x="744.5" y="113.500" width="21" height="21" fill="#d6d6d6" stroke="#b9b9b9" stroke-width="1" opacity="1"/><rect x="771.5" y="113.500" width="21" height="21" fill="#d6d6d6" stroke="#9c9c9c" stroke-width="1" opacity="1"/><rect x="798.5" y="113.500" width="21" height="21" fill="#d6d6d6" stroke="#b9b9b9" stroke-width="1" opacity=".45"/>
<!-- 1 needle -->
<path d="M696,118.500Q694,121 693.500,127.500" fill="none" stroke="#f0a030" stroke-width="1"/><path d="M695.500,118L697.500,117.500L709,128.500L708.500,129.500Z" fill="#1e1e1e" stroke="#1e1e1e" stroke-width=".8"/>
<path d="M691.4,130.0Q696.0,125.0 700.6,130.0Q696.0,134.2 691.4,130.0Z" fill="#fff" stroke="#1a1a1a" stroke-width=".7"/><circle cx="696.0" cy="129.8" r="1.500" fill="#111"/><circle cx="696.6" cy="129.2" r=".5" fill="#fff"/>
<!-- 2 shirt -->
<path d="M724,118Q728,120 732,118L736.500,121L734.500,124.500L732.500,123.500V131H723.500V123.500L721.500,124.500L719.500,121Z" fill="#fbfbfb" stroke="#cfcfcf" stroke-width=".6"/>
<path d="M718.4,130.0Q723.0,125.0 727.6,130.0Q723.0,134.2 718.4,130.0Z" fill="#fff" stroke="#1a1a1a" stroke-width=".7"/><circle cx="723.0" cy="129.8" r="1.500" fill="#111"/><circle cx="723.6" cy="129.2" r=".5" fill="#fff"/>
<!-- 3 info -->
<circle cx="755.500" cy="124" r="7" fill="#333"/><path d="M754.800,121.800L756.800,121.300V127.500L758,127.800V128.800H753.500V127.800L754.800,127.500Z" fill="#f5a000"/><circle cx="755.800" cy="119.200" r="1.200" fill="#f5a000"/>
<path d="M745.4,130.0Q750.0,125.0 754.6,130.0Q750.0,134.2 745.4,130.0Z" fill="#fff" stroke="#1a1a1a" stroke-width=".7"/><circle cx="750.0" cy="129.8" r="1.500" fill="#111"/><circle cx="750.6" cy="129.2" r=".5" fill="#fff"/>
<!-- 4 fabric -->
<path d="M774.500,121L778.500,120.500L777.500,130Q781,131.500 785,129.500L783,127.500Z" fill="#f4f4f4" stroke="#bdbdbd" stroke-width=".5"/><path d="M779.500,117.500Q784,116 790,117.500L787,128Q782,126.500 777.500,128Z" fill="url(#io)"/>
<!-- 5 locked shirt -->
<g opacity=".5"><path d="M805,118Q809,120 813,118L817.500,121L815.500,124.500L813.500,123.500V131H804.500V123.500L802.500,124.500L800.500,121Z" fill="#a8a8a8"/><rect x="800.800" y="126.500" width="5.500" height="5" fill="#eee"/><path d="M802,126.500V125Q803.500,123 805,125V126.500" fill="none" stroke="#eee" stroke-width="1"/></g>
<!-- 6 export -->
<path d="M836,114.500L841,120H838V123H834V120H831Z" fill="#7c7c7e"/><path d="M827.500,124H830V126.500H842V124H844.500V131.500H827.500Z" fill="#7c7c7e"/><path d="M831,126.500V128.500M834.500,126.500V128.500M838,126.500V128.500M841.500,126.500V128.500" stroke="#c9c9c9" stroke-width=".8"/>
</svg>

</body>
</html>
